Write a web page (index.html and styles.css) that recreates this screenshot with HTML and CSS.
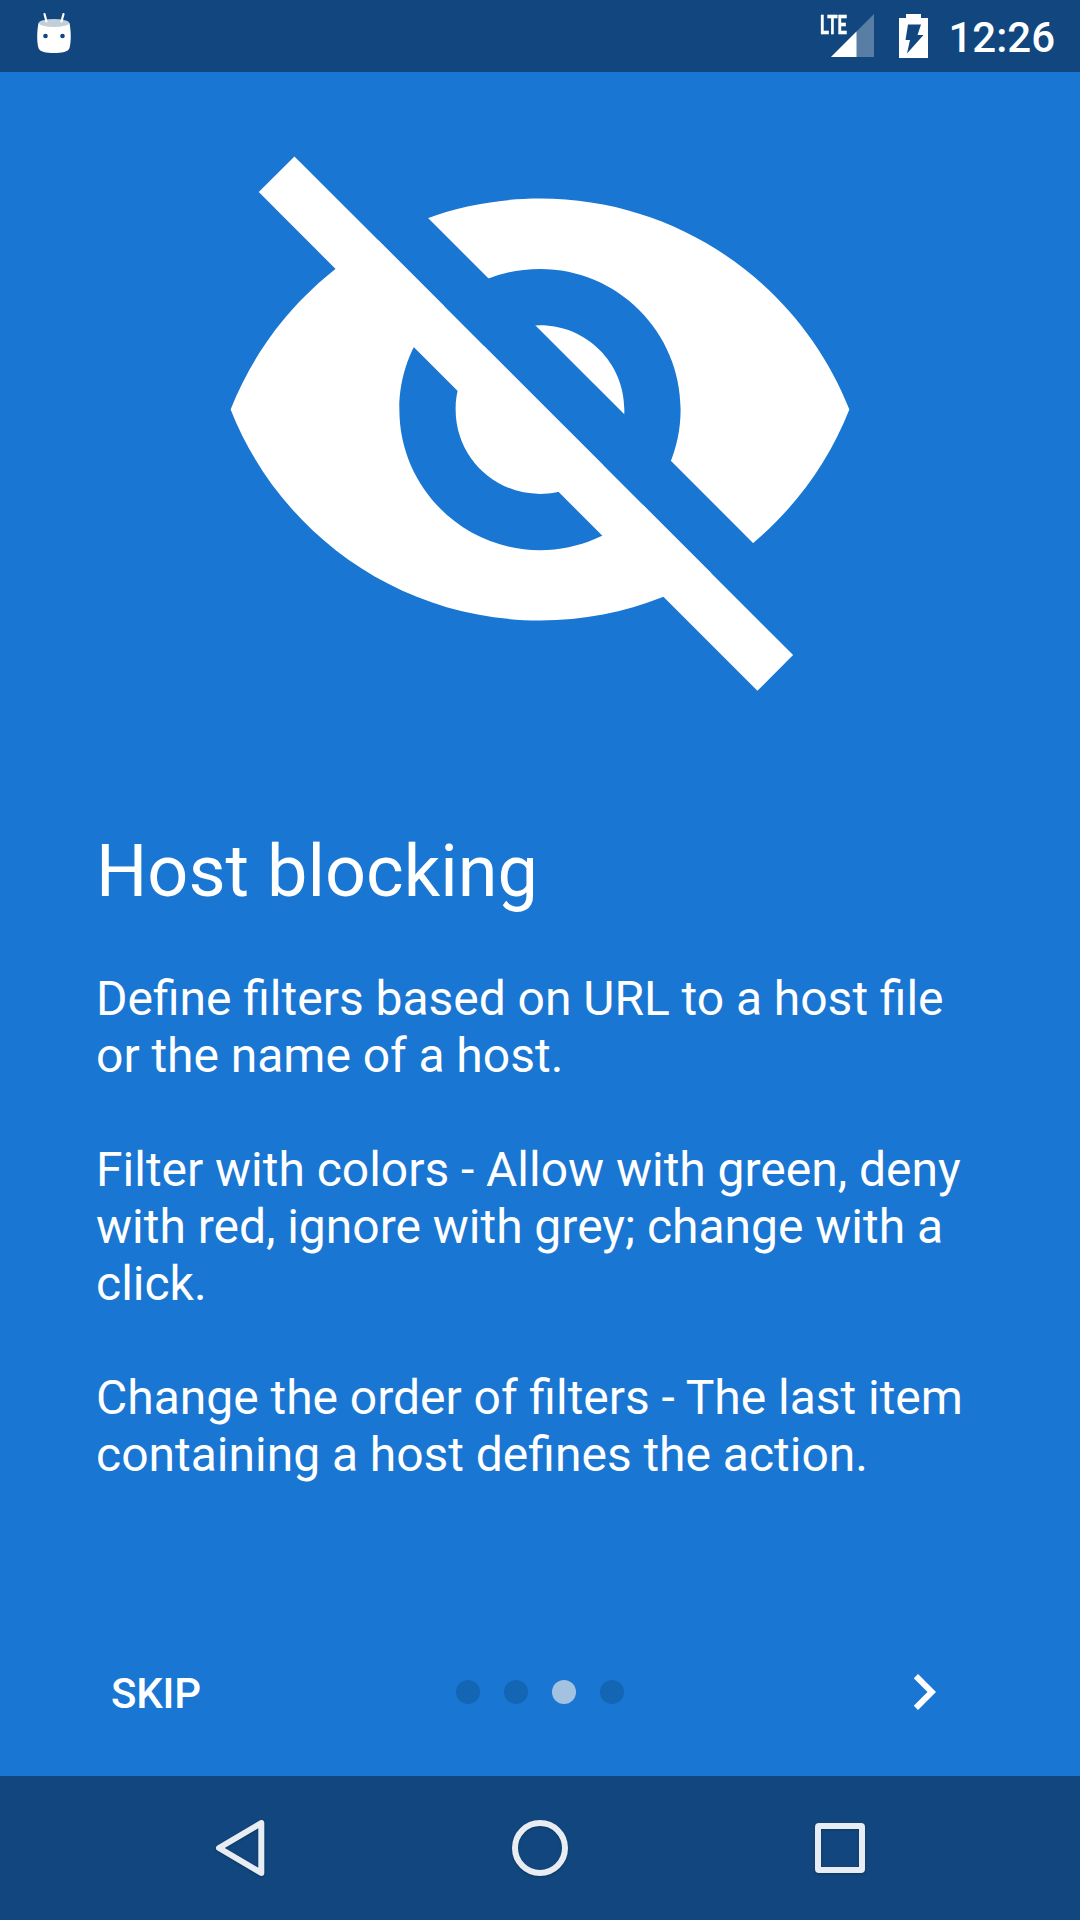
FILE: index.html
```html
<!DOCTYPE html>
<html lang="en">
<head>
<meta charset="utf-8">
<title>Host blocking</title>
<link rel="stylesheet" href="styles.css">
</head>
<body>
<div class="screen">
  <header class="status-bar">
    <svg class="robot" viewBox="0 0 36 44" width="36" height="44">
      <path d="M2.500 12C1 20 .6 30 2.500 37c1 4 8 5 15.500 5s14.500-1 15.500-5c1.900-7 1.500-17 0-25z" fill="#fff"/>
      <ellipse cx="18" cy="12" rx="15.300" ry="4" fill="#c3cedb"/>
      <path d="M8.500 3l2 7.500M27.500 3l-2 7.500" stroke="#fff" stroke-width="2.200" stroke-linecap="round"/>
      <circle cx="9.500" cy="25" r="2.300" fill="#11477e"/>
      <circle cx="26.500" cy="25" r="2.300" fill="#11477e"/>
    </svg>
    <div class="status-icons">
      <div class="signal">
        <svg viewBox="0 0 43 43" width="43" height="43">
          <path d="M0 43L43 0v43z" fill="#fff" fill-opacity=".3"/>
          <path d="M0 43L25.500 17.500V43z" fill="#fff"/>
        </svg>
        <span class="lte">LTE</span>
      </div>
      <svg class="battery" viewBox="0 0 29 44" width="29" height="44">
        <path d="M0 4h7V0h15v4h7v40H0z" fill="#fff"/>
        <path d="M9 10.500h13L18.500 21h6L8 39.500 11 26H6.500z" fill="#11477e"/>
      </svg>
      <span class="clock">12:26</span>
    </div>
  </header>
  <main class="slide">
    <svg class="hero" viewBox=".018 0 24 24" width="675" height="675">
      <path fill="#fff" fill-rule="evenodd" d="M12 4.500C7 4.500 2.730 7.610 1 12c1.730 4.390 6 7.500 11 7.500s9.270-3.110 11-7.500c-1.730-4.390-6-7.500-11-7.500zM12 17c-2.760 0-5-2.240-5-5s2.240-5 5-5 5 2.240 5 5-2.240 5-5 5zm0-8c-1.660 0-3 1.340-3 3s1.340 3 3 3 3-1.340 3-3-1.340-3-3-3z"/>
      <path fill="#1976d2" d="M3 2.730V.170L24 21.170v2.560z"/>
      <path fill="#fff" d="M3.270 3L2 4.270 19.730 22 21 20.730z"/>
    </svg>
    <div class="copy">
      <h1>Host blocking</h1>
      <p>Define filters based on URL to a host file<br>or the name of a host.</p>
      <p>Filter with colors - Allow with green, deny<br>with red, ignore with grey; change with a<br>click.</p>
      <p>Change the order of filters - The last item<br>containing a host defines the action.</p>
    </div>
  </main>
  <div class="pager">
    <button class="skip">SKIP</button>
    <div class="dots"><i></i><i></i><i class="current"></i><i></i></div>
    <button class="next" aria-label="Next">
      <svg viewBox="0 0 24 24" width="72" height="72"><path fill="#fff" d="M10 6L8.590 7.410 13.170 12l-4.580 4.590L10 18l6-6z"/></svg>
    </button>
  </div>
  <nav class="nav-bar">
    <svg viewBox="0 0 60 60" width="60" height="60"><path d="M51.300 5v50L9 30z"/></svg>
    <svg viewBox="0 0 60 60" width="60" height="60"><circle cx="30" cy="30" r="25"/></svg>
    <svg viewBox="0 0 60 60" width="60" height="60"><rect x="8" y="8" width="44" height="44" rx="1"/></svg>
  </nav>
</div>
</body>
</html>
```
FILE: styles.css
```css
* { box-sizing: border-box; }

body {
  margin: 0;
  font-family: Roboto, sans-serif;
  color: #fff;
}

svg { display: block; }

.screen {
  width: 1080px;
  height: 1920px;
  display: flex;
  flex-direction: column;
  background: #1976d2;
  overflow: hidden;
}

.status-bar {
  height: 72px;
  padding: 0 25px 0 36px;
  display: flex;
  justify-content: space-between;
  background: #11477e;
}

.robot { margin-top: 11px; }

.status-icons {
  display: flex;
  align-items: flex-start;
}

.signal {
  position: relative;
  margin: 14px 25px 0 0;
}

.lte {
  position: absolute;
  left: -11px;
  top: 1px;
  font: 700 26px/20px Roboto, sans-serif;
  transform: scaleX(.64);
  transform-origin: 0 0;
  -webkit-text-stroke: .5px #fff;
}

.battery { margin: 14px 20px 0 0; }

.clock {
  font-size: 42px;
  font-weight: 500;
  line-height: 49px;
  margin-top: 13px;
}

.slide {
  flex: 1;
  display: flex;
  flex-direction: column;
  align-items: center;
}

.copy {
  width: 100%;
  padding: 83px 90px 0 96px;
}

h1 {
  margin: 0 0 56px;
  font-size: 72px;
  font-weight: 400;
  line-height: 84px;
}

p {
  margin: 0 0 57px;
  font-size: 48px;
  line-height: 57px;
  white-space: nowrap;
  word-spacing: -.15px;
}

.pager {
  height: 168px;
  padding: 0 120px;
  display: grid;
  grid-template-columns: 1fr auto 1fr;
  align-items: center;
}

button {
  padding: 0;
  border: 0;
  background: none;
  color: inherit;
  font: 500 42px/49px Roboto, sans-serif;
}

.skip {
  justify-self: start;
  margin: 2px 0 0 -9px;
  letter-spacing: -.2px;
}

.next { justify-self: end; }

.dots {
  display: flex;
  gap: 24px;
}

.dots i {
  width: 24px;
  height: 24px;
  border-radius: 50%;
  background: #1565b5;
}

.dots .current { background: #a3c2e2; }

.nav-bar {
  height: 144px;
  display: flex;
  justify-content: center;
  align-items: center;
  gap: 240px;
  fill: none;
  stroke: #e8edf3;
  stroke-width: 6;
  stroke-linejoin: round;
  background: #11477e;
}

.nav-bar svg { filter: drop-shadow(0 1px 1px rgba(0, 0, 0, .25)); }
```
